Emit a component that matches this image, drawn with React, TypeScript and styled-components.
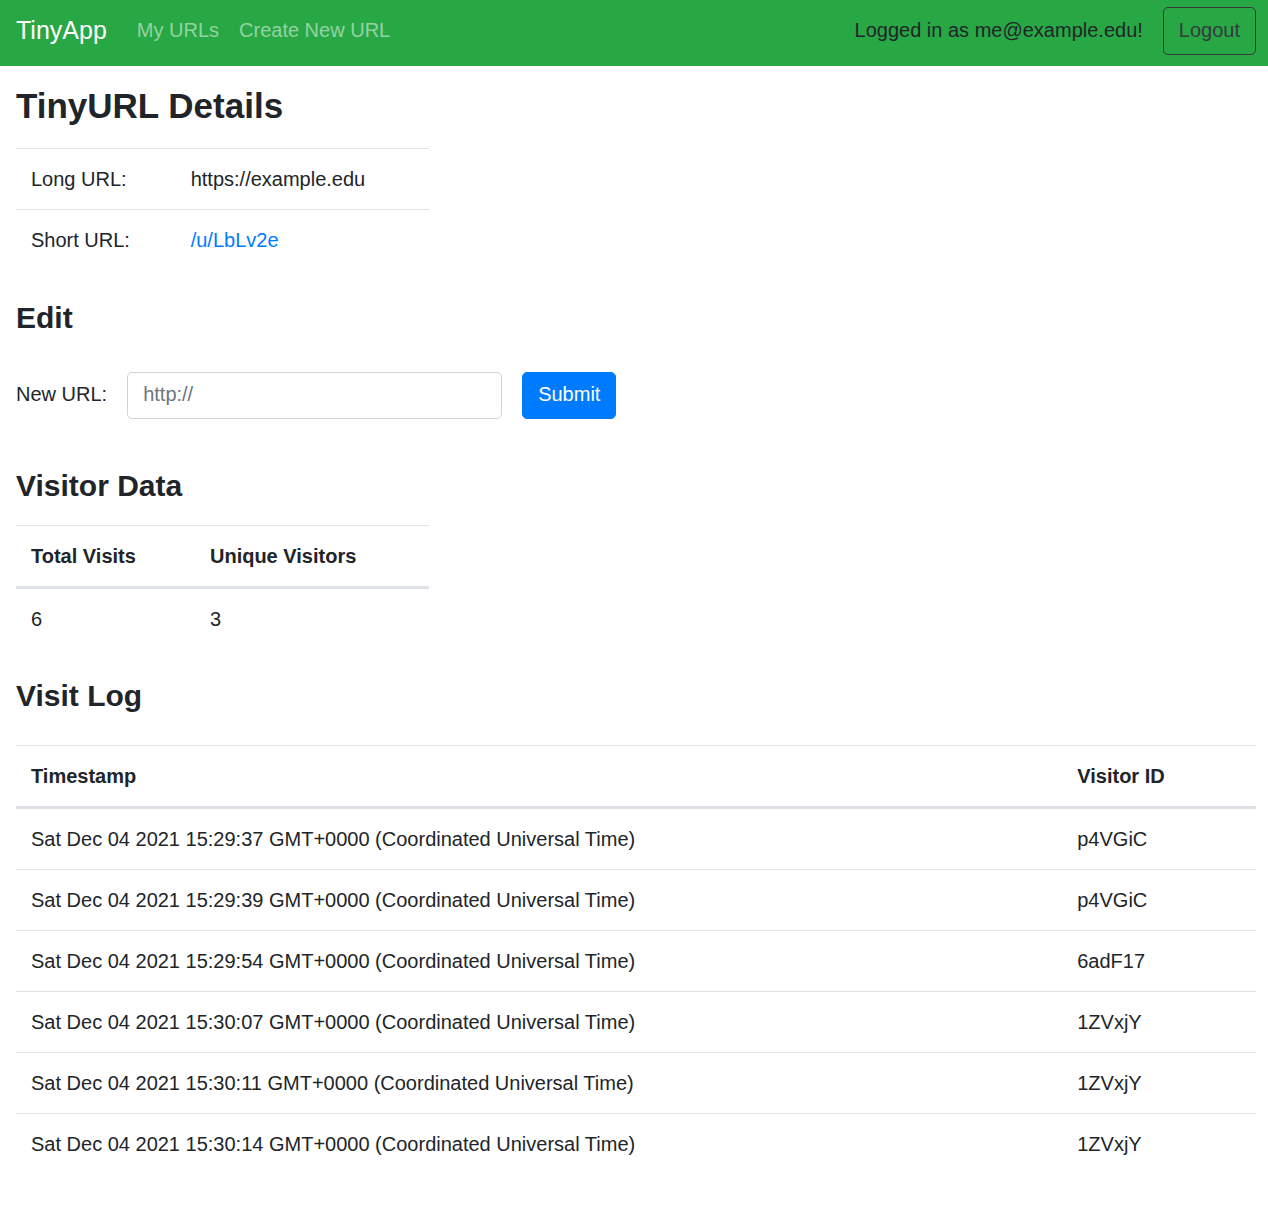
import React from "react";
import styled, { createGlobalStyle } from "styled-components";

const GlobalStyle = createGlobalStyle`
  html, body {
    margin: 0;
    padding: 0;
    background: #ffffff;
  }
  body {
    font-family: "Liberation Sans", Arial, Helvetica, sans-serif;
    font-size: 20px;
    line-height: 1.5;
    color: #212529;
  }
  * { box-sizing: border-box; }
`;

const Navbar = styled.nav`
  display: flex;
  align-items: center;
  height: 66px;
  padding: 0 12px 4px 16px;
  background: #28a745;
`;

const Brand = styled.a`
  font-size: 25px;
  line-height: 37.5px;
  color: #ffffff;
  text-decoration: none;
  margin-right: 20px;
`;

const NavLinks = styled.div`
  display: flex;
  align-items: center;
  margin-top: -2px;
`;

const NavLink = styled.a`
  padding: 0 10px;
  color: rgba(255, 255, 255, 0.5);
  text-decoration: none;
  line-height: 30px;
`;

const NavRight = styled.div`
  margin-left: auto;
  display: flex;
  align-items: center;
  gap: 20px;
`;

const LoggedIn = styled.span`
  color: #212529;
  margin-top: -2px;
`;

const OutlineButton = styled.button`
  font-family: inherit;
  font-size: 20px;
  line-height: 30px;
  padding: 7px 15px 9px;
  color: #343a40;
  background: transparent;
  border: 1px solid #343a40;
  border-radius: 5px;
`;

const Main = styled.main`
  padding: 0 12px 40px 16px;
`;

const Heading = styled.h2<{ $size: number; $top: number; $bottom: number }>`
  font-size: ${(p) => p.$size}px;
  line-height: 1.2;
  font-weight: 700;
  margin: ${(p) => p.$top}px 0 ${(p) => p.$bottom}px;
`;

const Table = styled.table<{ $width?: string }>`
  width: ${(p) => p.$width ?? "100%"};
  border-collapse: separate;
  border-spacing: 0;
  margin: 0;
`;

const Th = styled.th`
  text-align: left;
  font-weight: 700;
  padding: 15px;
  border-top: 1px solid #dee2e6;
  border-bottom: 2px solid #dee2e6;
  vertical-align: bottom;
`;

const Td = styled.td`
  padding: 15px;
  border-top: 1px solid #dee2e6;
  vertical-align: top;
`;

const Link = styled.a`
  color: #007bff;
  text-decoration: none;
`;

const EditForm = styled.form`
  display: flex;
  align-items: center;
  gap: 20px;
  margin: 36px 0 49px;
`;

const Label = styled.label`
  line-height: 30px;
  margin-bottom: 3px;
`;

const UrlInput = styled.input`
  width: 375px;
  height: 47px;
  padding: 6px 15px 8px;
  font-family: inherit;
  font-size: 20px;
  color: #495057;
  border: 1px solid #ced4da;
  border-radius: 5px;
  outline: none;
  &::placeholder {
    color: #6c757d;
  }
`;

const SubmitButton = styled.button`
  height: 47px;
  font-family: inherit;
  font-size: 20px;
  line-height: 30px;
  padding: 5px 15px 9px;
  color: #ffffff;
  background: #007bff;
  border: 1px solid #007bff;
  border-radius: 5px;
`;

const visits = [
  ["Sat Dec 04 2021 15:29:37 GMT+0000 (Coordinated Universal Time)", "p4VGiC"],
  ["Sat Dec 04 2021 15:29:39 GMT+0000 (Coordinated Universal Time)", "p4VGiC"],
  ["Sat Dec 04 2021 15:29:54 GMT+0000 (Coordinated Universal Time)", "6adF17"],
  ["Sat Dec 04 2021 15:30:07 GMT+0000 (Coordinated Universal Time)", "1ZVxjY"],
  ["Sat Dec 04 2021 15:30:11 GMT+0000 (Coordinated Universal Time)", "1ZVxjY"],
  ["Sat Dec 04 2021 15:30:14 GMT+0000 (Coordinated Universal Time)", "1ZVxjY"],
];

export default function App() {
  return (
    <>
      <GlobalStyle />
      <Navbar>
        <Brand href="#">TinyApp</Brand>
        <NavLinks>
          <NavLink href="#">My URLs</NavLink>
          <NavLink href="#">Create New URL</NavLink>
        </NavLinks>
        <NavRight>
          <LoggedIn>Logged in as me@example.edu!</LoggedIn>
          <OutlineButton type="button">Logout</OutlineButton>
        </NavRight>
      </Navbar>
      <Main>
        <Heading as="h1" $size={35} $top={19} $bottom={21}>
          TinyURL Details
        </Heading>
        <Table $width="413px">
          <tbody>
            <tr>
              <Td>Long URL:</Td>
              <Td>https://example.edu</Td>
            </tr>
            <tr>
              <Td>Short URL:</Td>
              <Td>
                <Link href="#">/u/LbLv2e</Link>
              </Td>
            </tr>
          </tbody>
        </Table>

        <Heading $size={30} $top={30} $bottom={0}>
          Edit
        </Heading>
        <EditForm onSubmit={(e) => e.preventDefault()}>
          <Label htmlFor="newUrl">New URL:</Label>
          <UrlInput id="newUrl" type="text" placeholder="http://" />
          <SubmitButton type="submit">Submit</SubmitButton>
        </EditForm>

        <Heading $size={30} $top={0} $bottom={21}>
          Visitor Data
        </Heading>
        <Table $width="413px">
          <thead>
            <tr>
              <Th>Total Visits</Th>
              <Th>Unique Visitors</Th>
            </tr>
          </thead>
          <tbody>
            <tr>
              <Td>6</Td>
              <Td>3</Td>
            </tr>
          </tbody>
        </Table>

        <Heading $size={30} $top={29} $bottom={31}>
          Visit Log
        </Heading>
        <Table>
          <thead>
            <tr>
              <Th>Timestamp</Th>
              <Th>Visitor ID</Th>
            </tr>
          </thead>
          <tbody>
            {visits.map(([ts, id]) => (
              <tr key={ts}>
                <Td>{ts}</Td>
                <Td>{id}</Td>
              </tr>
            ))}
          </tbody>
        </Table>
      </Main>
    </>
  );
}
